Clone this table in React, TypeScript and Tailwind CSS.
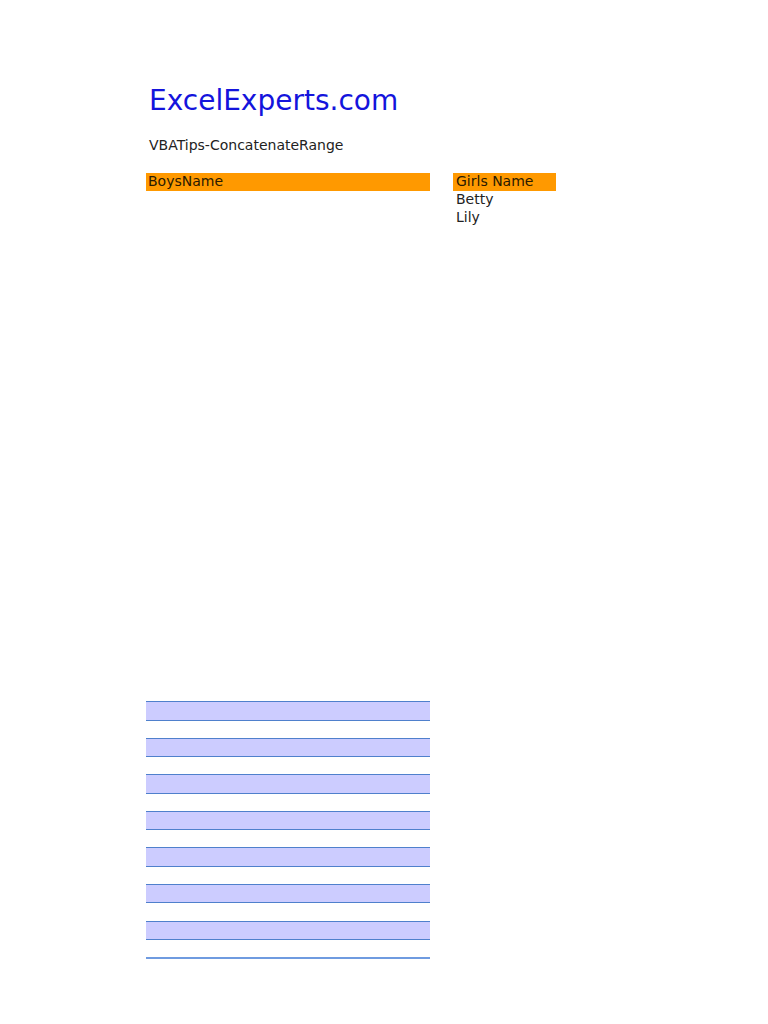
import React from "react";

export default function App() {
  const bands = Array.from({ length: 7 });
  return (
    <div className="w-[768px] h-[1024px] bg-white" style={{ fontFamily: '"DejaVu Sans", Verdana, sans-serif' }}>
      <div className="pl-[146px] pt-[84px]">
        <div className="pl-[3px] text-[28px] leading-[34px] text-[#1414dc]">ExcelExperts.com</div>
        <div className="pl-[3px] mt-[18px] text-[14px] leading-[18px] text-[#222]">VBATips-ConcatenateRange</div>
        <div className="mt-[19px] flex gap-[23px] text-[14px] leading-[16px] text-[#222]">
          <div className="w-[284px]">
            <div className="h-[18px] bg-[#ff9900] pl-[2px] text-[#2a1a00]">BoysName</div>
          </div>
          <div className="w-[103px]">
            <div className="h-[18px] bg-[#ff9900] pl-[3px] text-[#2a1a00]">Girls Name</div>
            <div className="h-[18px] pl-[3px]">Betty</div>
            <div className="h-[18px] pl-[3px]">Lily</div>
          </div>
        </div>
        <div className="mt-[474px] w-[284px] flex flex-col">
          {bands.map((_, i) => (
            <React.Fragment key={i}>
              <div className="h-[19.5px] box-border bg-[#ccccff] border-y-[1.5px] border-[#4f80cc]" />
              <div className="h-[17.1px]" />
            </React.Fragment>
          ))}
          <div className="h-[1.5px] bg-[#6f9be0]" />
        </div>
      </div>
    </div>
  );
}
